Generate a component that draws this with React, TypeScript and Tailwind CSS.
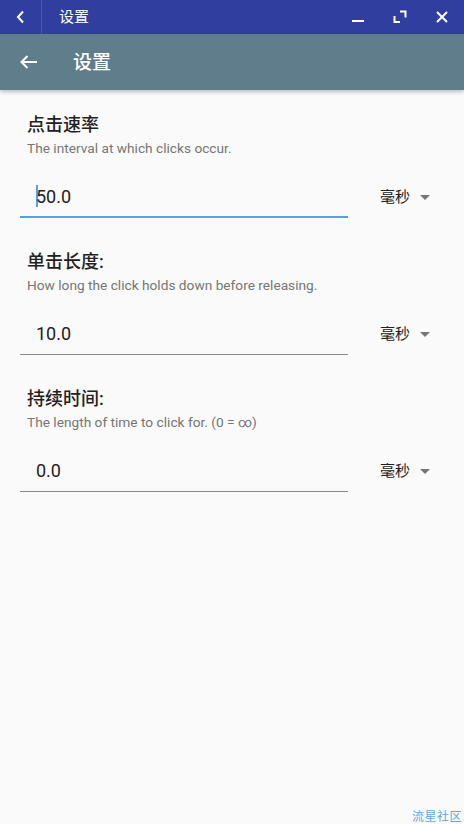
import React from 'react';

const fields = [
  { title: '点击速率', desc: 'The interval at which clicks occur.', value: '50.0', focused: true },
  { title: '单击长度:', desc: 'How long the click holds down before releasing.', value: '10.0', focused: false },
  { title: '持续时间:', desc: 'The length of time to click for. (0 = ∞)', value: '0.0', focused: false },
];

const font = "font-['Roboto','Noto_Sans_CJK_SC',sans-serif]";

const App: React.FC = () => {
  return (
    <div className={`w-[464px] h-[824px] bg-[#fafafa] flex flex-col relative overflow-hidden ${font}`}>
      {/* window title bar */}
      <div className="h-[34px] bg-[#303f9f] flex items-center text-white shrink-0">
        <div className="w-[42px] h-full flex items-center justify-center border-r border-[#4756ad]">
          <svg width="14" height="14" viewBox="0 0 14 14" fill="none" stroke="white" strokeWidth="2">
            <path d="M9 1.5 L4 7 L9 12.5" />
          </svg>
        </div>
        <span className="ml-[17px] text-[15px] leading-none">设置</span>
        <div className="ml-auto flex items-center h-full mr-[1px]">
          <div className="w-[42px] h-full flex items-center justify-center">
            <svg width="14" height="14" viewBox="0 0 14 14" fill="none" stroke="white" strokeWidth="2">
              <path d="M1 11 H13" />
            </svg>
          </div>
          <div className="w-[42px] h-full flex items-center justify-center">
            <svg width="14" height="14" viewBox="0 0 14 14" fill="none" stroke="white" strokeWidth="2">
              <path d="M7 1.5 H12.5 V7.5" />
              <path d="M1.5 6 V12 H7" />
            </svg>
          </div>
          <div className="w-[42px] h-full flex items-center justify-center">
            <svg width="14" height="14" viewBox="0 0 14 14" fill="none" stroke="white" strokeWidth="2">
              <path d="M2 2 L12 12 M12 2 L2 12" />
            </svg>
          </div>
        </div>
      </div>

      {/* app bar */}
      <div className="h-[56px] bg-[#607d8b] flex items-center text-white shrink-0 shadow-[0_2px_4px_rgba(0,0,0,0.25)] z-10">
        <svg className="ml-[20px]" width="17" height="14" viewBox="0 0 17 14" fill="none" stroke="white" strokeWidth="2">
          <path d="M17 7 H2 M7.5 1 L1.5 7 L7.5 13" />
        </svg>
        <span className="ml-[36px] text-[19px] font-medium leading-none">设置</span>
      </div>

      {/* settings list */}
      <div className="flex flex-col gap-[32px] pt-[23px]">
        {fields.map((f) => (
          <div key={f.title} className="flex flex-col">
            <div className="pl-[27px] text-[18px] leading-[24px] font-medium text-[#212121]">{f.title}</div>
            <div className="pl-[27px] mt-[3px] text-[13.7px] leading-[16px] text-[#757575]">{f.desc}</div>
            <div className="mt-[22px] flex items-center">
              <div
                className={`ml-[20px] w-[328px] h-[40px] flex items-center pl-[16px] pb-[2px] text-[18px] text-[#212121] ${
                  f.focused ? 'border-b-2 border-[#4ea6dc]' : 'border-b border-[#8a8a8a]'
                }`}
              >
                {f.focused && <span className="w-[2px] h-[22px] bg-[#4ea6dc] -mr-[2px]" />}
                <span>{f.value}</span>
              </div>
              <div className="ml-[32px] flex items-center text-[15px] text-[#212121] pb-[1px]">
                <span>毫秒</span>
                <svg className="ml-[10px]" width="10" height="5" viewBox="0 0 10 5">
                  <path d="M0 0 H10 L5 5 Z" fill="#757575" />
                </svg>
              </div>
            </div>
          </div>
        ))}
      </div>

      {/* watermark */}
      <div className="absolute right-[2px] bottom-[-2px] text-[12px] text-[#5aa7e0] tracking-[0.5px]">流星社区</div>
    </div>
  );
};

export default App;
